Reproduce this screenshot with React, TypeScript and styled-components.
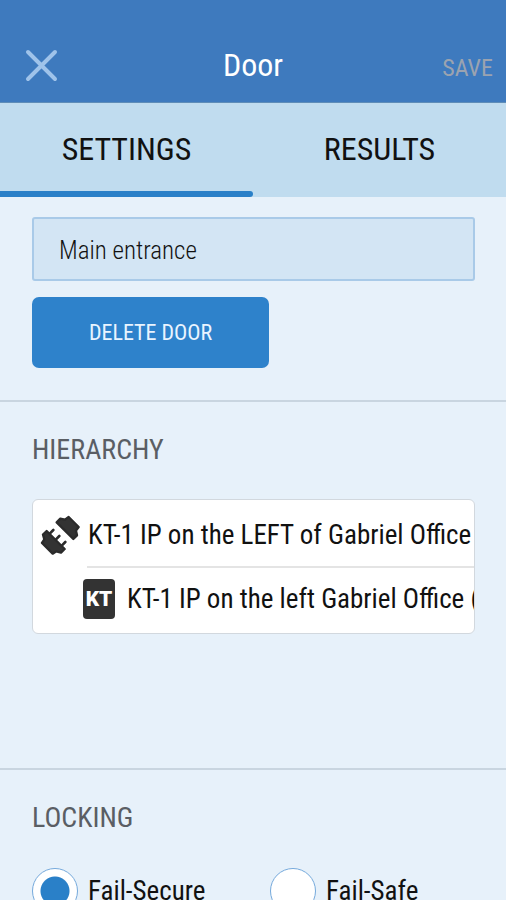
import React, { useState } from "react";
import styled, { createGlobalStyle } from "styled-components";

const GlobalStyle = createGlobalStyle`
  *, *::before, *::after { box-sizing: border-box; }
  body {
    margin: 0;
    background: #e7f1fa;
    color: #111;
    font-family: "Roboto Condensed", "Liberation Sans Narrow", Roboto, sans-serif;
  }
  button, input { font: inherit; color: inherit; }
  button { border: 0; padding: 0; background: none; cursor: pointer; }
`;

const Screen = styled.div`
  display: flex;
  flex-direction: column;
  height: 100vh;
`;

const AppBar = styled.header`
  display: grid;
  grid-template-columns: 1fr auto 1fr;
  align-items: center;
  padding: 40px 13px 12px;
  background: #3e7abe;
  border-bottom: 1px solid #5f8db8;
`;

const Title = styled.h1`
  margin: 0;
  color: #fff;
  font-size: 32px;
  line-height: 50px;
  font-weight: 400;
`;

const CloseButton = styled.button`
  justify-self: start;
  display: flex;
  margin-left: 11px;
`;

const SaveButton = styled.button`
  justify-self: end;
  && { color: #9ba3b0; }
  font-size: 24px;
  line-height: 28px;
  padding-top: 6px;
`;

const Tabs = styled.div`
  display: grid;
  grid-template-columns: 1fr 1fr;
  background: #c0dcef;
`;

const Tab = styled.button<{ $active: boolean }>`
  display: flex;
  flex-direction: column;
  align-items: center;
  padding-top: 13px;
  font-size: 32px;
  line-height: 66px;
  &::after {
    content: "";
    align-self: stretch;
    height: 6px;
    margin-top: 9px;
    border-radius: 0 3px 3px 0;
    background: ${(p) => (p.$active ? "#2a80c8" : "transparent")};
  }
`;

const Content = styled.main`
  flex: 1;
  overflow-y: auto;
  scrollbar-width: none;
`;

const Section = styled.section<{ $size?: "tall" }>`
  padding: 20px 31px 32px 32px;
  border-bottom: 2px solid #c9d5e0;
  min-height: ${(p) => (p.$size === "tall" ? "368px" : "0")};
`;

const Heading = styled.h2`
  margin: 0 0 32px;
  padding-top: 11px;
  color: #5a5e64;
  font-size: 28px;
  line-height: 34px;
  font-weight: 400;
`;

const NameInput = styled.input`
  display: block;
  width: 100%;
  height: 64px;
  margin-bottom: 16px;
  padding: 2px 25px 0;
  font-size: 25px;
  font-weight: 300;
  background: #d3e5f4;
  border: 2px solid #a9cae8;
  border-radius: 3px;
  outline: none;
`;

const DeleteButton = styled.button`
  height: 71px;
  padding: 0 57px;
  && { color: #e9f4ff; background: #2e82cb; }
  font-size: 22px;
  border-radius: 7px;
`;

const Tree = styled.ul`
  margin: 0;
  padding: 4px 0 3px;
  list-style: none;
  overflow: hidden;
  background: #fff;
  border: 1px solid #d2d8de;
  border-radius: 6px;
`;

const TreeRow = styled.li<{ $depth: number }>`
  display: flex;
  align-items: center;
  gap: ${(p) => (p.$depth ? 12 : 8)}px;
  height: 62px;
  padding-left: ${(p) => (p.$depth ? 50 : 7)}px;
  font-size: 27px;
  white-space: nowrap;
  svg { flex: none; }
`;

const Divider = styled.li`
  height: 2px;
  margin-left: 54px;
  background: #e4e4e4;
`;

const Options = styled.div`
  display: grid;
  grid-template-columns: 238px 1fr;
`;

const Option = styled.label`
  display: flex;
  align-items: center;
  gap: 10px;
  font-size: 27px;
  line-height: 48px;
`;

const Radio = styled.input`
  appearance: none;
  width: 46px;
  height: 46px;
  margin: 0;
  border: 1px solid #76aadc;
  border-radius: 50%;
  background: #fff;
  &:checked { background: radial-gradient(circle, #2a80c8 14px, #fff 15px); }
`;

const PlugIcon = () => (
  <svg width="40" height="40" viewBox="6 6 120 120" fill="#333" stroke="#2b2b2b" strokeWidth="7" strokeLinejoin="round" strokeLinecap="round" aria-hidden="true">
    <path d="M56 28L67 17L81 20L92 12L122 42L114 53L117 67L106 78Z" />
    <path d="M26 54L15 65L19 79L12 90L44 122L55 115L69 119L80 108Z" />
    <path d="M36 61L46 51M54 79L64 69M72 97L82 87" strokeWidth="8" />
  </svg>
);

const KtBadge = styled.span`
  flex: none;
  width: 32px;
  height: 40px;
  border-radius: 4px;
  background: #333;
  color: #fff;
  font: 900 21px/40px Roboto, sans-serif;
  text-align: center;
`;

const tabs = ["SETTINGS", "RESULTS"];
const modes = ["Fail-Secure", "Fail-Safe"];

export default function App() {
  const [tab, setTab] = useState(tabs[0]);
  const [mode, setMode] = useState(modes[0]);
  const [name, setName] = useState("Main entrance");
  return (
    <Screen>
      <GlobalStyle />
      <AppBar>
        <CloseButton aria-label="Close">
          <svg width="34" height="34" viewBox="0 0 34 34" stroke="#9fc3ea" strokeWidth="4" strokeLinecap="round">
            <path d="M4 4l27 27M31 4l-27 27" />
          </svg>
        </CloseButton>
        <Title>Door</Title>
        <SaveButton>SAVE</SaveButton>
      </AppBar>
      <Tabs role="tablist">
        {tabs.map((t) => (
          <Tab key={t} role="tab" aria-selected={t === tab} $active={t === tab} onClick={() => setTab(t)}>
            {t}
          </Tab>
        ))}
      </Tabs>
      <Content>
        <Section>
          <NameInput aria-label="Door name" value={name} onChange={(e) => setName(e.target.value)} />
          <DeleteButton>DELETE DOOR</DeleteButton>
        </Section>
        <Section $size="tall">
          <Heading>HIERARCHY</Heading>
          <Tree>
            <TreeRow $depth={0}>
              <PlugIcon />
              KT-1 IP on the LEFT of Gabriel Office
            </TreeRow>
            <Divider role="presentation" />
            <TreeRow $depth={1}>
              <KtBadge>KT</KtBadge>
              KT-1 IP on the left Gabriel Office (
            </TreeRow>
          </Tree>
        </Section>
        <Section>
          <Heading id="locking">LOCKING</Heading>
          <Options role="radiogroup" aria-labelledby="locking">
            {modes.map((m) => (
              <Option key={m}>
                <Radio type="radio" name="locking" checked={m === mode} onChange={() => setMode(m)} />
                {m}
              </Option>
            ))}
          </Options>
        </Section>
      </Content>
    </Screen>
  );
}
